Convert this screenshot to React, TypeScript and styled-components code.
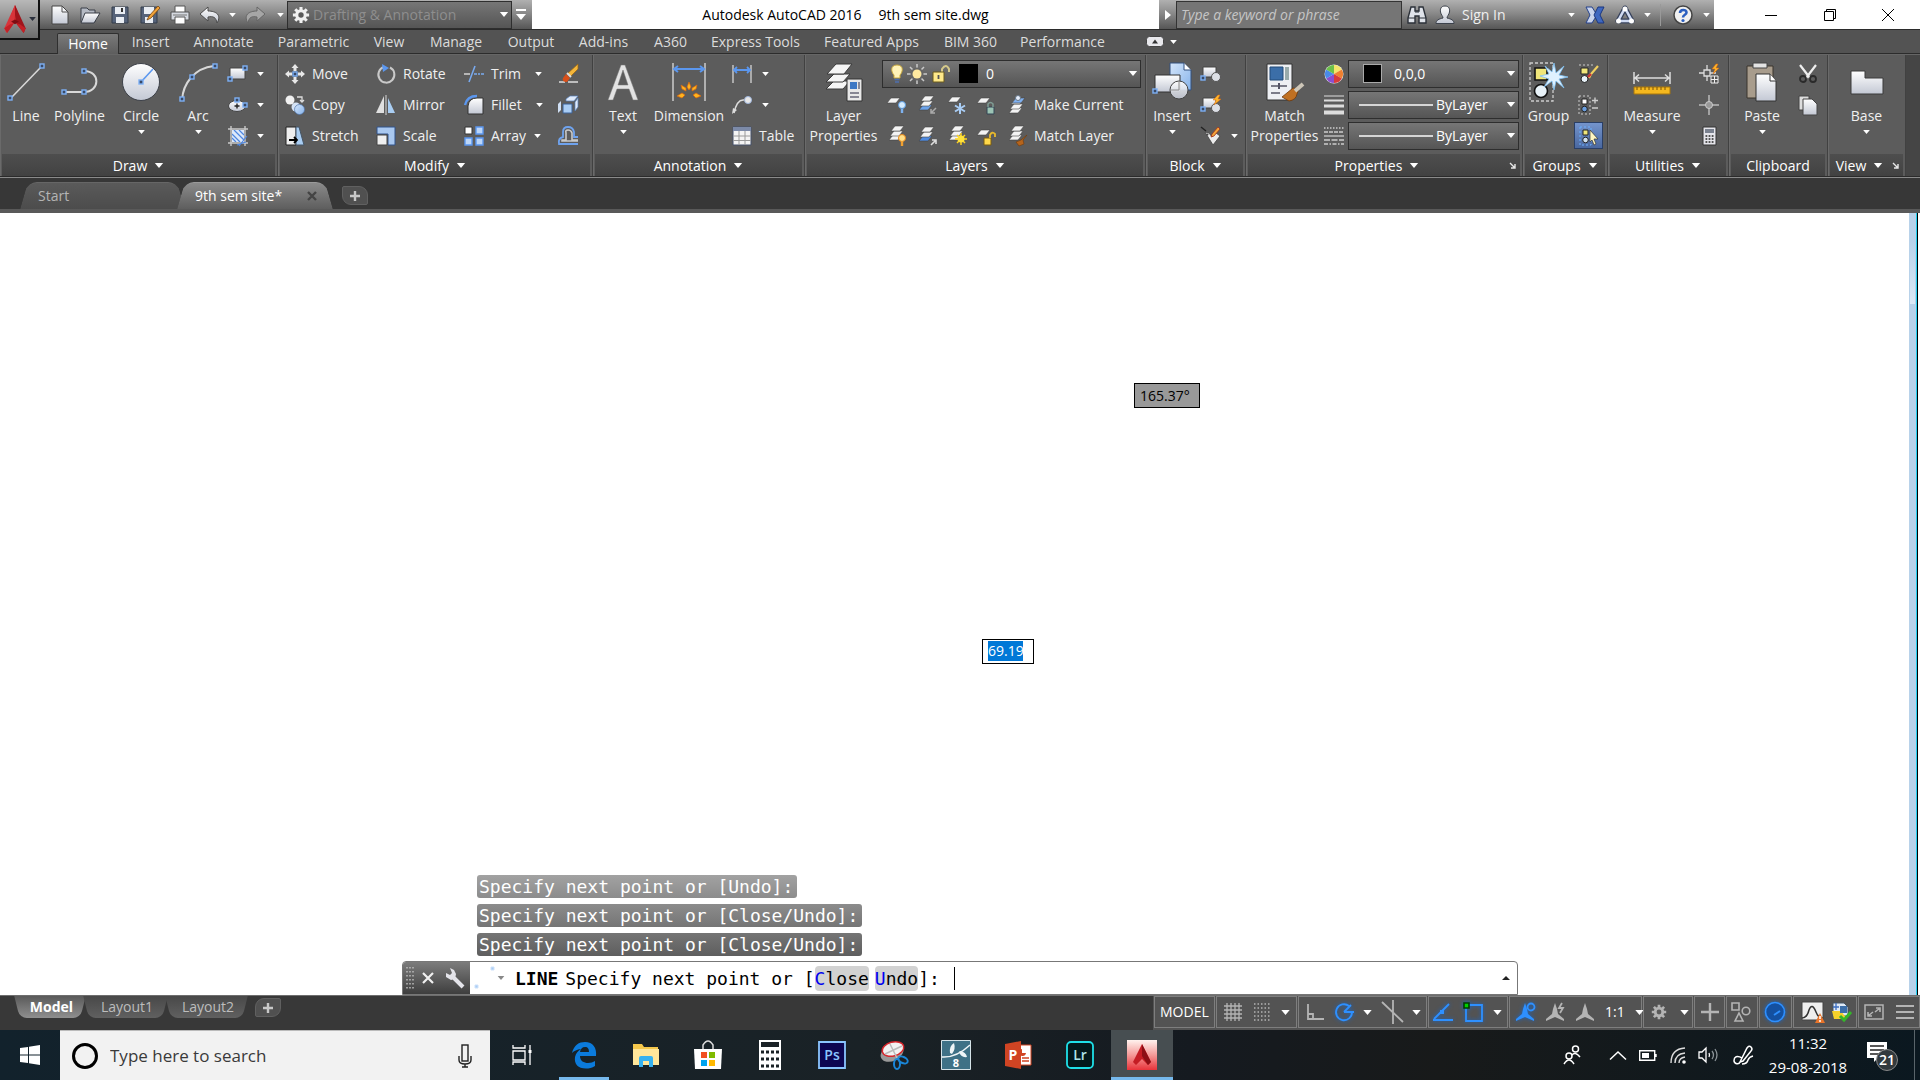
import React from "react";
import styled, { createGlobalStyle, css } from "styled-components";

const Global = createGlobalStyle`
  * { box-sizing: border-box; }
  body { margin: 0; background: #fff; }
  button, input, select { font: inherit; color: inherit; margin: 0; padding: 0; border: 0; background: none; }
  button { cursor: default; }
`;

const App_ = styled.div`
  display: flex;
  flex-direction: column;
  min-height: 100vh;
  font: 14px/20px "Open Sans", "Noto Sans", sans-serif;
  color: #f0f0f0;
  overflow: hidden;
`;

const row = css`
  display: flex;
  align-items: center;
`;

/* ---------- drawing helpers ---------- */

const Svg = styled.svg<{ $w?: number; $h?: number; $glow?: boolean }>`
  display: block;
  flex: none;
  width: ${(p) => p.$w ?? 20}px;
  height: ${(p) => p.$h ?? p.$w ?? 20}px;
  overflow: visible;
  ${(p) => p.$glow && "filter: drop-shadow(0 0 2px #1766c8);"}
`;

type DrawProps = { w?: number; h?: number; vb?: string; glow?: boolean; children: React.ReactNode };
const Draw = ({ w, h, vb, glow, children }: DrawProps) => (
  <Svg $w={w} $h={h} $glow={glow} viewBox={vb ?? `0 0 ${w ?? 20} ${h ?? w ?? 20}`} fill="none" aria-hidden="true">
    {children}
  </Svg>
);

const Tri = ({ w = 7, c = "#fff" }: { w?: number; c?: string }) => (
  <Draw w={w} h={w > 8 ? 5 : 4} vb="0 0 10 6">
    <path d="M0 0h10L5 6z" fill={c} />
  </Draw>
);

const grip = (x: number, y: number) => <rect x={x - 2} y={y - 2} width="4" height="4" fill="#3a4a66" stroke="#7db0f5" strokeWidth="1.4" />;
const sheet = (x: number, y: number, fill = "#f4f4f4") => <path d={`M${x + 4} ${y}h9l-4 5h-9z`} fill={fill} stroke="#444" strokeWidth=".6" />;

const Defs = () => (
  <Svg $w={0} $h={0} aria-hidden="true">
    <defs>
      <linearGradient id="silver" x1="0" y1="0" x2="0" y2="1">
        <stop offset="0" stopColor="#fff" />
        <stop offset="1" stopColor="#c3c8d4" />
      </linearGradient>
      <linearGradient id="sky" x1="0" y1="0" x2="1" y2="1">
        <stop offset="0" stopColor="#d5e6fb" />
        <stop offset="1" stopColor="#86b3ea" />
      </linearGradient>
      <linearGradient id="ruby" x1="0" y1="0" x2="0" y2="1">
        <stop offset="0" stopColor="#fff2ee" />
        <stop offset=".5" stopColor="#f59a98" />
        <stop offset="1" stopColor="#e8333a" />
      </linearGradient>
    </defs>
  </Svg>
);

const LogoA = ({ w, h }: { w: number; h: number }) => (
  <Draw w={w} h={h} vb="0 0 24 30">
    <path d="M12 0 7 13l-2 8 7-2 7 2-2-8z" fill="#c9242a" />
    <path d="M12 0 1 24l2 5 8-10 1-9z" fill="#d8343a" />
    <path d="M12 0l11 24-2 5-7-9-2-10z" fill="#a0141b" />
    <path d="M1 24l6-4 4-1-7 10zM23 24l-6-4-4-1 8 10z" fill="#c42026" />
    <path d="M8 17l4-2 4 2-4 3z" fill="#7d0d12" />
  </Draw>
);

/* ---------- title bar ---------- */

const TitleBar = styled.header`
  display: flex;
  position: relative;
  height: 30px;
  border-bottom: 1px solid #2b2b2b;
  background: #fff;
`;
const chrome = css`
  ${row}
  background: linear-gradient(#b0b0b0, #8a8a8a 45%, #565656);
`;
const QuickAccess = styled.nav`
  ${chrome}
  width: 532px;
  padding-left: 49px;
`;
const AppButton = styled.button`
  ${row}
  position: absolute;
  z-index: 2;
  left: 0;
  top: 0;
  width: 40px;
  height: 40px;
  padding-left: 3px;
  gap: 2px;
  background: linear-gradient(#b8b8b8, #6c6c6c);
  border-right: 2px solid #111;
  border-bottom: 2px solid #111;
`;
const ToolButton = styled.button<{ $w?: number; $end?: boolean }>`
  ${row}
  justify-content: ${(p) => (p.$end ? "flex-end" : "center")};
  flex: none;
  width: ${(p) => p.$w ?? 30}px;
  height: 28px;
`;
const Combo = styled.div<{ $h?: number; $w?: number; $gap?: number; $pad?: number }>`
  ${row}
  position: relative;
  flex: none;
  width: ${(p) => (p.$w ? `${p.$w}px` : "100%")};
  height: ${(p) => p.$h ?? 28}px;
  gap: ${(p) => p.$gap ?? 4}px;
  padding: 0 6px 0 ${(p) => p.$pad ?? 6}px;
  border: 1px solid #2e2e2e;
  background: linear-gradient(#767676, #555);
  > svg:last-child {
    position: absolute;
    right: 2px;
    pointer-events: none;
  }
`;
const Select = styled.select<{ $dim?: boolean }>`
  flex: 1;
  min-width: 0;
  height: 24px;
  appearance: none;
  outline: 0;
  color: ${(p) => (p.$dim ? "#8e8e8e" : "#fff")};
`;
const WindowTitle = styled.h1`
  ${row}
  justify-content: center;
  flex: 1;
  margin: 0;
  gap: 17px;
  font-size: 14px;
  font-weight: 400;
  color: #000;
`;
const InfoCenter = styled.div`
  ${chrome}
  width: 555px;
`;
const Keyword = styled.input`
  width: 226px;
  height: 28px;
  margin-left: -1px;
  padding-left: 4px;
  border: 1px solid #333;
  background: #757575;
  font-style: italic;
  &::placeholder { color: #c6c6c6; opacity: 1; }
`;
const SignIn = styled.button`
  ${row}
  flex: 1;
  gap: 7px;
  padding-left: 3px;
`;
const Rule = styled.i`
  width: 1px;
  height: 22px;
  background: #999;
  margin: 0 7px;
`;
const WindowButtons = styled.div`
  ${row}
  width: 206px;
  padding: 0 3px 0 27px;
`;

/* ---------- ribbon ---------- */

const TabRow = styled.nav`
  ${row}
  height: 24px;
  padding-left: 57px;
  background: #535353;
  border-bottom: 1px solid #2c2c2c;
`;
const RibbonTab = styled.button<{ $on?: boolean; $w: number }>`
  align-self: stretch;
  width: ${(p) => p.$w}px;
  padding-top: 1px;
  white-space: nowrap;
  color: ${(p) => (p.$on ? "#fff" : "#dcdcdc")};
  ${(p) =>
    p.$on &&
    css`
      border: 1px solid #2f2f2f;
      border-bottom: 0;
      margin: 3px 0 -1px;
      padding: 0;
      border-radius: 2px 2px 0 0;
      background: linear-gradient(#7a7a7a, #5d5d5d);
      line-height: 16px;
    `}
`;
const Ribbon = styled.div`
  display: flex;
  height: 124px;
  background: #454545;
  border-top: 1px solid #666;
  border-bottom: 1px solid #8a8a8a;
  box-shadow: inset 0 -1px #2b2b2b;
`;
const PanelBox = styled.section<{ $w: number }>`
  display: flex;
  flex-direction: column;
  flex: none;
  width: ${(p) => p.$w}px;
  margin-bottom: 1px;
  background: #5c5c5c;
  border-right: 1px solid #414141;
  box-shadow: inset 1px 0 #6a6a6a;
`;
const PanelBody = styled.div`
  display: flex;
  flex: 1;
  padding-top: 3px;
`;
const PanelTitle = styled.button<{ $launch?: boolean }>`
  ${row}
  justify-content: center;
  position: relative;
  gap: 7px;
  height: 22px;
  margin: 0 2px;
  padding: 1px ${(p) => (p.$launch ? 14 : 0)}px 0 0;
  color: #fff;
  background: linear-gradient(#4e4e4e, #424242);
`;
const Launcher = styled.span`
  position: absolute;
  right: 4px;
  top: 8px;
`;
const Panel = ({ w, title, menu = true, launch, children }: { w: number; title: string; menu?: boolean; launch?: boolean; children: React.ReactNode }) => (
  <PanelBox $w={w} aria-label={title}>
    <PanelBody>{children}</PanelBody>
    <PanelTitle $launch={launch}>
      {title}
      {menu && <Tri w={10} />}
      {launch && (
        <Launcher>
          <Draw w={7} h={7}><path d="M1 1l5 5M6 2v4H2" stroke="#e8e8e8" strokeWidth="1.4" /></Draw>
        </Launcher>
      )}
    </PanelTitle>
  </PanelBox>
);

const Big = styled.button<{ $w: number }>`
  display: flex;
  flex-direction: column;
  align-items: center;
  flex: none;
  width: ${(p) => p.$w}px;
  white-space: nowrap;
  > svg:last-child:not(:first-child) { margin-top: 4px; }
`;
const BigIcon = styled.span`
  ${row}
  justify-content: center;
  height: 48px;
`;
const BigButton = ({ w, icon, label, menu }: { w: number; icon: React.ReactNode; label: string[]; menu?: boolean }) => (
  <Big $w={w}>
    <BigIcon>{icon}</BigIcon>
    {label.map((l) => <span key={l}>{l}</span>)}
    {menu && <Tri />}
  </Big>
);
const Col = styled.div<{ $w: number; $pad?: number }>`
  display: flex;
  flex-direction: column;
  flex: none;
  width: ${(p) => p.$w}px;
  padding-left: ${(p) => p.$pad ?? 0}px;
`;
const SmallRow = styled.div`
  ${row}
  height: 31px;
`;
const Small = styled.button<{ $on?: boolean; $gap?: number }>`
  ${row}
  gap: ${(p) => p.$gap ?? 7}px;
  min-width: 20px;
  white-space: nowrap;
  ${(p) =>
    p.$on &&
    css`
      width: 29px;
      height: 27px;
      margin-left: -4px;
      padding-left: 4px;
      background: linear-gradient(#7494cc, #4a68a0);
      border: 1px solid #2a3f66;
    `}
`;
const DropButton = styled.button<{ $pad?: number }>`
  ${row}
  height: 20px;
  padding: 0 4px 0 ${(p) => p.$pad ?? 8}px;
`;
type Item = { icon: React.ReactNode; label?: string; menu?: number; name: string; on?: boolean };
const Tool = ({ icon, label, menu, name, on }: Item) => (
  <SmallRow>
    <Small aria-label={name} $on={on}>{icon}{label}</Small>
    {menu !== undefined && <DropButton $pad={menu} aria-label={`${name} options`}><Tri /></DropButton>}
  </SmallRow>
);

const LayerGrid = styled.div`
  display: flex;
  flex-direction: column;
  flex: 1;
  padding-right: 4px;
`;
const LayerTools = styled(SmallRow)`
  padding-left: 5px;
  gap: 10px;
`;
const PropRow = styled(SmallRow)`
  gap: 4px;
  padding-right: 4px;
`;
const Swatch = styled.i<{ $edge?: boolean }>`
  flex: none;
  width: 19px;
  height: 19px;
  margin: 0 4px;
  background: #000;
  border: 1px solid ${(p) => (p.$edge ? "#aaa" : "#000")};
`;
const Stroke = styled.i`
  width: 74px;
  height: 2px;
  background: #d5d5d5;
`;

/* ---------- document tabs ---------- */

const DocTabs = styled.nav`
  display: flex;
  align-items: flex-end;
  height: 35px;
  padding-left: 24px;
  background: #373737;
  border-bottom: 4px solid #595959;
`;
const DocTab = styled.button<{ $on?: boolean; $w: number }>`
  ${row}
  position: relative;
  isolation: isolate;
  justify-content: space-between;
  width: ${(p) => p.$w}px;
  height: 27px;
  padding: 1px 12px 0 14px;
  color: ${(p) => (p.$on ? "#fff" : "#b4b4b4")};
  &::before, &::after {
    content: "";
    position: absolute;
    z-index: -1;
    top: 0;
    bottom: 0;
    border-top: 1px solid ${(p) => (p.$on ? "#9a9a9a" : "#666")};
    background: ${(p) => (p.$on ? "linear-gradient(#8a8a8a, #5e5e5e)" : "linear-gradient(#5a5a5a, #4c4c4c)")};
  }
  &::before { left: 0; right: 50%; transform: skewX(-16deg); border-top-left-radius: 9px; }
  &::after { right: 0; left: 40%; transform: skewX(16deg); border-top-right-radius: 9px; }
`;
const NewTab = styled.button`
  ${row}
  justify-content: center;
  width: 26px;
  height: 19px;
  margin: 0 0 4px 13px;
  background: #505050;
  border: 1px solid #606060;
  border-radius: 2px 9px 2px 9px;
`;

/* ---------- drawing area ---------- */

const Canvas = styled.main`
  position: relative;
  flex: 1;
  min-height: 400px;
  background: #fff;
`;
const Edge = styled.div`
  position: absolute;
  top: 0;
  bottom: 0;
  right: 2px;
  width: 9px;
  background: #b8d2ea;
  border-right: 1px solid #000;
  box-shadow: inset -1px 0 #20d0f0;
`;
const Thumb = styled.div`
  height: 91px;
  margin: 0 2px 0 1px;
  background: linear-gradient(#b8d2ea 30%, #dce9f6);
`;
const Angle = styled.output`
  position: absolute;
  left: 1134px;
  top: 170px;
  width: 66px;
  height: 25px;
  padding-left: 5px;
  line-height: 23px;
  background: #999;
  border: 1px solid #000;
  color: #000;
`;
const LengthBox = styled.label`
  position: absolute;
  left: 982px;
  top: 426px;
  width: 52px;
  height: 25px;
  padding: 1px 5px;
  background: #fff;
  border: 1px solid #000;
`;
const LengthInput = styled.input`
  display: block;
  width: 35px;
  height: 20px;
  background: #0078d7;
  color: #fff;
`;
const Console = styled.div`
  position: absolute;
  left: 402px;
  right: 402px;
  bottom: 0;
  font: 18px/23px "DejaVu Sans Mono", "Liberation Mono", monospace;
`;
const History = styled.div`
  display: flex;
  flex-direction: column;
  align-items: flex-start;
  gap: 6px;
  margin: 0 0 5px 75px;
`;
const Past = styled.span<{ $tone: string }>`
  padding: 0 4px 0 2px;
  border-radius: 3px;
  background: ${(p) => p.$tone};
  color: #fff;
`;
const CommandLine = styled.form`
  ${row}
  height: 34px;
  border: 1px solid #777;
  border-radius: 4px 4px 0 0;
  background: #fff;
  color: #000;
  white-space: pre;
`;
const Handle = styled.div`
  ${row}
  align-self: stretch;
  width: 67px;
  gap: 8px;
  padding-left: 3px;
  background: linear-gradient(#7c7c7c, #3e3e3e);
  border-radius: 3px 0 0 0;
`;
const CommandIcon = styled.span`
  ${row}
  width: 45px;
  padding-left: 5px;
`;
const Keyname = styled.b`
  margin-right: 7px;
`;
const Option = styled.button`
  height: 25px;
  border-radius: 4px;
  background: #d2d2d2;
  color: #000;
  & + & { margin-left: 6px; }
  em { font-style: normal; color: #0000f0; }
`;
const Blink = styled.i`
  width: 1px;
  height: 23px;
  margin-left: 14px;
  background: #000;
`;
const CommandInput = styled.input`
  flex: 1;
  min-width: 0;
  outline: 0;
`;

/* ---------- layout tabs and status bar ---------- */

const StatusBar = styled.footer`
  display: flex;
  justify-content: space-between;
  height: 35px;
  background: #383838;
  border-top: 1px solid #6e6e6e;
`;
const Layouts = styled.nav`
  display: flex;
  padding-left: 17px;
`;
const LayoutTab = styled.button<{ $on?: boolean; $w: number }>`
  position: relative;
  isolation: isolate;
  width: ${(p) => p.$w}px;
  height: 22px;
  color: ${(p) => (p.$on ? "#fff" : "#bdbdbd")};
  font-weight: ${(p) => (p.$on ? 700 : 400)};
  &::before, &::after {
    content: "";
    position: absolute;
    z-index: -1;
    top: 0;
    bottom: 0;
    background: ${(p) => (p.$on ? "linear-gradient(#5a5a5a, #8f8f8f)" : "linear-gradient(#484848, #606060)")};
  }
  &::before { left: 0; right: 40%; transform: skewX(14deg); border-bottom-left-radius: 7px; }
  &::after { right: 3px; left: 40%; transform: skewX(-14deg); border-bottom-right-radius: 7px; }
`;
const AddLayout = styled(NewTab)`
  height: 19px;
  margin: 2px 0 0 7px;
  border-radius: 9px 2px 9px 2px;
`;
const Status = styled.div`
  display: flex;
  background: #535353;
  padding: 0 0 2px 1px;
  gap: 1px;
`;
const Cell = styled.div<{ $w: number; $pad?: number; $gap?: number }>`
  ${row}
  width: ${(p) => p.$w}px;
  padding-left: ${(p) => p.$pad ?? 6}px;
  gap: ${(p) => p.$gap ?? 9}px;
  border: 1px solid #7e7e7e;
  color: #fff;
`;
const Bare = styled.button`
  ${row}
  flex: none;
  height: 24px;
`;

/* ---------- taskbar ---------- */

const Taskbar = styled.footer`
  display: flex;
  height: 50px;
  background: linear-gradient(90deg, #12222c, #1a2226 45%, #151a20 62%, #181a1a 75%, #0b1820);
  color: #fff;
`;
const Slot = styled.button<{ $w?: number; $run?: boolean; $on?: boolean }>`
  ${row}
  justify-content: center;
  flex: none;
  width: ${(p) => p.$w ?? 62}px;
  background: ${(p) => (p.$on ? "#474e51" : "none")};
  border: solid transparent;
  border-width: 0 ${(p) => (p.$run && !p.$on ? 6 : 0)}px;
  background-clip: padding-box;
  ${(p) => p.$run && "background-image: linear-gradient(0deg, #76b9ed 3px, transparent 3px);"}
`;
const Search = styled.label`
  ${row}
  width: 430px;
  gap: 12px;
  padding: 0 18px 0 12px;
  border-top: 1px solid #bbb;
  background: #f2f2f2;
`;
const SearchInput = styled.input`
  flex: 1;
  min-width: 0;
  font-size: 17px;
  &::placeholder { color: #3a3a3a; opacity: 1; }
`;
const Tray = styled.div`
  display: flex;
  margin-left: auto;
  padding-right: 5px;
`;
const Clock = styled.button`
  width: 90px;
  padding-bottom: 1px;
  line-height: 24px;
  font-size: 15px;
`;
const Peek = styled.i`
  width: 1px;
  margin-left: 3px;
  background: #59646a;
`;

/* ---------- icons ---------- */

const stack = (y: number, fill?: string) => <>{sheet(2, y + 9, fill)}{sheet(3, y + 5)}{sheet(4, y)}</>;

const I = {
  newFile: <Draw><path d="M2 1h10l6 6v12H2z" fill="url(#silver)" stroke="#444" /><path d="M12 1v6h6" stroke="#555" /></Draw>,
  open: <Draw><path d="M1 3h6l2 2h6v12H1z" fill="#b5bac4" stroke="#3a3f48" /><path d="M5 8h15l-6 10H1z" fill="url(#silver)" stroke="#3a3f48" /></Draw>,
  save: <Draw><path d="M2 2h16v16H2z" fill="#56637a" stroke="#333c4b" /><path d="M5 2h10v7H5zM6 12h8v6H6z" fill="#e9edf3" /><path d="M12 3v4" stroke="#333" strokeWidth="2" /></Draw>,
  saveAs: <Draw><path d="M1 2h16v16H1z" fill="#56637a" stroke="#333c4b" /><path d="M4 2h10v7H4zM5 12h8v6H5z" fill="#e9edf3" /><path d="M18 1 9 11l-2 4 4-2 9-10z" fill="#f2a33a" stroke="#74420c" strokeWidth=".8" /></Draw>,
  print: <Draw><path d="M5 1h10v7H5z" fill="#fff" stroke="#555" /><path d="M1 7h18v8H1z" fill="#d5d9e0" stroke="#555" /><path d="M5 12h10v7H5z" fill="#fff" stroke="#555" /><path d="M3 10h14" stroke="#777" /></Draw>,
  undo: <Draw><path d="M8 2 0 9l8 7v-4c5-1 8 0 9 6 5-8-1-12-9-12z" fill="url(#silver)" stroke="#4b4b4b" /></Draw>,
  redo: <Draw><path d="M12 2l8 7-8 7v-4c-5-1-8 0-9 6-5-8 1-12 9-12z" fill="#a6a6a6" stroke="#666" /></Draw>,
  gear: (c: string, w = 20) => <Draw w={w} vb="0 0 20 20"><g stroke={c} strokeWidth="3.4"><path d="M10 1v18M1 10h18M3.6 3.6l12.8 12.8M16.4 3.6 3.6 16.4" /></g><circle cx="10" cy="10" r="6.5" fill={c} /><circle cx="10" cy="10" r="3" fill="#5a5a5a" /></Draw>,
  binoc: <Draw><path d="M4 2h4v4h4V2h4l3 11v5h-7v-7H8v7H1v-5z" fill="#dfe3ea" stroke="#2b3038" strokeWidth="1.4" /><path d="M1 13h7M12 13h7M8 7h4" stroke="#2b3038" /></Draw>,
  user: <Draw><path d="M10 1c4 0 5 3 4.500 6S12 11 12 13c4 1 7 2 7 5.500H1C1 15 4 14 8 13c0-2-2-3-2.500-6S6 1 10 1z" fill="url(#silver)" stroke="#3c424c" /></Draw>,
  xchg: <Draw><path d="M1 2h6l5 8-5 8H1l4-8z" fill="#c9d4ec" stroke="#24418c" /><path d="M19 2h-6l-4 8 4 8h6l-4-8z" fill="#3f68c0" stroke="#1b377f" /></Draw>,
  a360: <Draw><path d="M10 3 3 16h14z" stroke="#37425c" strokeWidth="5" strokeLinejoin="round" /><path d="M10 3 3 16h14z" stroke="#cfdaf2" strokeWidth="2.6" strokeLinejoin="round" /><circle cx="10" cy="4" r="2.500" fill="#fff" /><circle cx="3.500" cy="16" r="2.500" fill="#fff" /><circle cx="16.500" cy="16" r="2.500" fill="#fff" /></Draw>,
  line: <Draw w={40} h={40}><path d="M5 36 36 4" stroke="#d8d8d8" strokeWidth="1.6" />{grip(4, 36)}{grip(36, 4)}</Draw>,
  poly: <Draw w={40} h={40}><path d="M4 30h20c16 0 17-21 0-21" stroke="#d8d8d8" strokeWidth="2" />{grip(4, 30)}{grip(24, 30)}{grip(24, 9)}</Draw>,
  circle: <Draw w={40} h={40}><circle cx="20" cy="20" r="18.500" fill="url(#silver)" stroke="#3d4149" /><path d="M20 20 32 7" stroke="#5b97ef" strokeWidth="1.6" />{grip(20, 20)}</Draw>,
  arc: <Draw w={40} h={40}><path d="M4 38C5 22 16 6 36 4" stroke="#d8d8d8" strokeWidth="2" />{grip(4, 37)}{grip(14, 15)}{grip(37, 4)}</Draw>,
  rect: <Draw><path d="M2 4h15v11H2z" fill="url(#silver)" stroke="#444" />{grip(17, 4)}{grip(2, 15)}</Draw>,
  ellipse: <Draw><ellipse cx="9" cy="11" rx="8.500" ry="5.500" fill="url(#silver)" stroke="#444" /><path d="M9 8.500v5M6.500 11h5" stroke="#222" strokeWidth="1.4" />{grip(9, 5)}{grip(17, 10)}</Draw>,
  hatch: <Draw><path d="M4 4h12v12H4z" fill="#dce8fa" /><path d="M4 8l8 8M4 12l4 4M6 4l10 10M11 4l5 5" stroke="#4d86e0" strokeWidth="1.2" /><path d="M0 3h20M0 17h20M3 0v20M17 0v20" stroke="#c9c9c9" strokeWidth="1.4" /><path d="M11 20l8-10M9 19l9-3" stroke="#4d86e0" strokeWidth="1.2" /></Draw>,
  move: <Draw><path d="M10 0l3.500 4h-2v3h-3V4h-2zM10 20l3.500-4h-2v-3h-3v3h-2zM0 10l4-3.500v2h3v3H4v2zM20 10l-4-3.500v2h-3v3h3v2z" fill="#e8e8e8" />{grip(10, 10)}</Draw>,
  copy: <Draw><circle cx="5" cy="5" r="4.500" fill="#f1f1f1" /><circle cx="11" cy="12" r="4.500" fill="#d5e3f5" /><circle cx="14.500" cy="14.500" r="5" fill="url(#sky)" stroke="#4f74ab" strokeWidth=".7" /><path d="M12 2h5v4m-2-1 2 2 2-2" stroke="#ddd" strokeWidth="1.3" /></Draw>,
  stretch: <Draw><path d="M1 1h10v18H1z" fill="#eee" stroke="#222" /><path d="M11 1h3l5 18h-8z" fill="#a9cdf2" stroke="#456" /><path d="M4 14h8m-3-3 3 3-3 3" stroke="#000" strokeWidth="1.8" /></Draw>,
  rotate: <Draw><path d="M8 3a8 8 0 1 0 6 0.500" stroke="#c9c9c9" strokeWidth="2" /><path d="M6 0l7 4-6 4z" fill="#5b97ef" /></Draw>,
  mirror: <Draw><path d="M8 1v17H0z" fill="#e0e0e0" /><path d="M12 3v15h7z" fill="#a9cdf2" /><path d="M10 0v20" stroke="#d8d8d8" /></Draw>,
  scale: <Draw><path d="M1 1h18v18h-7V8H1z" fill="#a9c8f0" stroke="#31528a" /><path d="M1 9h10v10H1z" fill="#f0f0f0" stroke="#444" /></Draw>,
  trim: <Draw><path d="M10 10h3m1 0h2m1 0h3" stroke="#79aaf0" strokeWidth="1.4" /><path d="M5 18 11 2" stroke="#79aaf0" strokeWidth="1.6" /><path d="M0 10h6" stroke="#ddd" strokeWidth="1.4" /></Draw>,
  fillet: <Draw><path d="M4 19V11q1-8 9-8h6v16z" fill="url(#silver)" stroke="#333" /><path d="M1 10Q3 1 13 1" stroke="#5b97ef" strokeWidth="2.400" /></Draw>,
  array: <Draw><path d="M1 1h7v7H1z" fill="#fff" stroke="#333" /><path d="M12 1h7v7h-7zM1 12h7v7H1zM12 12h7v7h-7z" fill="#bcd6f8" stroke="#5b97ef" strokeWidth="1.4" /></Draw>,
  erase: <Draw><path d="M1 18h6M10 18h10" stroke="#ddd" strokeWidth="1.3" /><path d="M20 0v5l-8 8-3-3z" fill="#f4b63a" stroke="#9a6410" strokeWidth=".7" /><path d="M8 10l4 4-3 4c-3 0-5-1-4-4z" fill="#d94f18" /><path d="M9 9l4 4" stroke="#ddd" strokeWidth="2" /></Draw>,
  explode: <Draw><path d="M8 4l4-3h8l-4 5H8zM17 7l3-4v9l-3 4z" fill="#dfeafa" stroke="#5580bb" strokeWidth=".7" /><path d="M5 9h9v9H5z" fill="#a9cdf5" stroke="#3c6399" /><path d="M0 9l3-3v9l-3 3z" fill="#cfdff4" /></Draw>,
  offset: <Draw><path d="M20 11h-4V6q-1-5-6-5T5 6v5Q0 12 1 18h19" stroke="#6fa3ee" strokeWidth="1.800" /><path d="M20 14h-6V7q-1-3-4-3T8 7v7H4v1h16" stroke="#c9c9c9" strokeWidth="1.600" /></Draw>,
  text: <Draw w={34} h={38}><path d="M2 37 15 2h4l13 35h-5l-4-11H11L7 37zM12 22h10L17 7z" fill="#e3e3e3" fillRule="evenodd" stroke="#777" strokeWidth=".5" /></Draw>,
  dim: <Draw w={34} h={40}><path d="M1 1v38M33 1v38" stroke="#ccc" strokeWidth="1.500" /><path d="M2 7h30M6 4 2 7l4 3M28 4l4 3-4 3" stroke="#5b97ef" strokeWidth="2" /><path d="M17 20l2 5-2 3-2-3zM9 23l5 3v3l-4-2zM25 23l-5 3v3l4-2zM5 34l5-3 3 2-3 3zM29 34l-5-3-3 2 3 3z" fill="#ffb41f" stroke="#d9660e" strokeWidth=".7" /></Draw>,
  linear: <Draw><path d="M1 1v18M19 1v18" stroke="#ccc" strokeWidth="1.400" /><path d="M2 6h16M5 3 2 6l3 3M15 3l3 3-3 3" stroke="#5b97ef" strokeWidth="1.800" /></Draw>,
  leader: <Draw><path d="M2 18Q5 4 12 5" stroke="#ddd" strokeWidth="1.500" /><path d="M0 19l1-6 4 2z" fill="#ddd" /><circle cx="16" cy="5" r="3.500" fill="#e8e8e8" stroke="#9fb6dd" /></Draw>,
  table: <Draw><path d="M1 1h18v18H1z" fill="#f4f4f4" stroke="#44506a" /><path d="M1 1h18v4H1z" fill="#7c8aa8" /><path d="M1 10h18M1 14.500h18M7 5v14M13 5v14" stroke="#9a9a9a" /></Draw>,
  layerProps: <Draw w={38} h={40}><g fill="#f5f5f5" stroke="#3b3b3b"><path d="M9 19h16l-7 8H1z" /><path d="M9 12h16l-7 8H1z" /><path d="M11 2h16l-8 10H2z" /></g><path d="M22 17h15v22H22z" fill="#e8e8e8" stroke="#333" /><path d="M25 20h7v7h-7z" fill="#3e78c4" /><path d="M34 20v7M25 31h9M25 35h9" stroke="#667" strokeWidth="1.400" /></Draw>,
  bulb: <Draw w={12} h={20}><path d="M6 1c7 0 6 7 3 10v3H3v-3C0 8-1 1 6 1z" fill="#fff3b8" stroke="#c9a83c" /><path d="M3.500 15.500h5M4 18h4" stroke="#4d6fb0" strokeWidth="1.500" /></Draw>,
  sun: <Draw><g stroke="#c9c9c9" strokeWidth="1.500"><path d="M10 0v20M0 10h20M3 3l14 14M17 3 3 17" /></g><circle cx="10" cy="10" r="6.500" fill="#666" /><circle cx="10" cy="10" r="4.500" fill="#ffe9a0" /></Draw>,
  unlock: <Draw><path d="M11 9V5q4-6 7 0v3" stroke="#d5c98a" strokeWidth="2" /><path d="M2 8h11v10H2z" fill="#ffe98a" stroke="#6b5b1c" /><path d="M7.500 11v4" stroke="#555" strokeWidth="1.800" /></Draw>,
  lOff: <Draw>{sheet(0, 3)}<circle cx="15" cy="10" r="3.500" fill="#d5ecff" stroke="#5a9be0" /><path d="M15 14v4" stroke="#7eb2f0" strokeWidth="2.400" /></Draw>,
  lIso: <Draw>{stack(1, "#6ba3ea")}<path d="M19 13l-5 5m0-4v4h4" stroke="#aaa" strokeWidth="1.500" /></Draw>,
  lFrz: <Draw>{sheet(1, 2)}<path d="M13 8v11M8 10.500l10 6M18 10.500l-10 6" stroke="#a9cdf5" strokeWidth="2" /></Draw>,
  lLock: <Draw>{sheet(0, 3)}<path d="M10 12h7v7h-7z" fill="#9cc4b4" stroke="#345" /><path d="M11 12V9q2.500-3 5 0v3" stroke="#7f9c94" strokeWidth="1.500" /></Draw>,
  lCur: <Draw>{stack(4)}{sheet(5, 3, "#7fb0f0")}<circle cx="11" cy="3" r="2.500" fill="#e6eefc" stroke="#678" /></Draw>,
  lOn: <Draw>{stack(0)}<circle cx="15" cy="12" r="3.500" fill="#ffe08a" stroke="#e8871a" /><path d="M15 15v5" stroke="#f0a030" strokeWidth="2.400" /></Draw>,
  lUniso: <Draw>{stack(1, "#4f8ae0")}<path d="M14 19l5-5m-4 0h4v4" stroke="#ddd" strokeWidth="1.600" /></Draw>,
  lThaw: <Draw>{stack(0)}<path d="M14 7v12M8 13h12M10 9l8 8M18 9l-8 8" stroke="#ffd21e" strokeWidth="1.500" /><circle cx="14" cy="13" r="3.500" fill="#ffe23a" /></Draw>,
  lUnlock: <Draw>{sheet(0, 4)}<path d="M7 12h7v7H7z" fill="#ffd84a" stroke="#7a5c10" /><path d="M13 12V9q2-4 5-1v3" stroke="#e8b92c" strokeWidth="1.800" /></Draw>,
  lMatch: <Draw>{stack(0)}<path d="M20 9l-4 5 1 4-5 2-3-4 5-2z" fill="#b5641c" stroke="#6e3a0c" strokeWidth=".6" /></Draw>,
  insert: <Draw w={40} h={40}><path d="M18 1h14l7 7v20H18z" fill="url(#sky)" stroke="#33507e" /><path d="M32 1v7h7" fill="#fff" stroke="#33507e" /><path d="M3 13h25v17H3z" fill="url(#silver)" stroke="#333" /><circle cx="27" cy="28" r="9" fill="url(#silver)" fillOpacity=".9" stroke="#444" /><path d="M27 20v8h-8" stroke="#888" />{grip(3, 29)}</Draw>,
  block: (extra: React.ReactNode) => <Draw><path d="M2 3h13v10H2z" fill="url(#silver)" stroke="#444" /><circle cx="15" cy="13" r="4.500" fill="#dcdfe6" stroke="#555" />{grip(2, 14)}{extra}</Draw>,
  attrib: <Draw><path d="M0 1l5 4" stroke="#222" strokeWidth="1.500" /><path d="M4 6l4 1 3 4 4-4 4 3-7 9z" fill="#ececec" stroke="#444" strokeWidth=".8" /><circle cx="6.500" cy="8.500" r="1" fill="#444" /><path d="M17 1l-6 7-1 3 3-1 6-7z" fill="#f2a33a" stroke="#a3341a" strokeWidth=".8" /></Draw>,
  matchProps: <Draw w={40} h={40}><path d="M2 2h25v36H2z" fill="#eef0f4" stroke="#333" /><path d="M5 5h13v13H5z" fill="#3b6ea8" stroke="#234a78" /><path d="M22 5v13" stroke="#9aa" strokeWidth="4" /><path d="M6 24h16M6 31h9" stroke="#556" strokeWidth="1.500" /><path d="M14 21v6" stroke="#556" strokeWidth="2" /><path d="M33 27l-5-1-11 9 7 4q7-1 8-7l1-3z" fill="#c07022" stroke="#6e3a0c" strokeWidth=".8" /><path d="M38 22l-8 7" stroke="#cdc6b8" strokeWidth="4" /></Draw>,
  wheel: <Draw><circle cx="10" cy="10" r="9.500" fill="#eee" /><path d="M10 10V1a9 9 0 0 1 7.800 4.500z" fill="#f5e56a" /><path d="M10 10l7.800-4.500a9 9 0 0 1 0 9z" fill="#f08030" /><path d="M10 10l7.800 4.500A9 9 0 0 1 10 19z" fill="#d83a3a" /><path d="M10 10v9a9 9 0 0 1-7.800-4.500z" fill="#8a4fd0" /><path d="M10 10l-7.800 4.500a9 9 0 0 1 0-9z" fill="#4a8ae8" /><path d="M10 10 2.200 5.500A9 9 0 0 1 10 1z" fill="#6cc04a" /></Draw>,
  weight: <Draw><path d="M0 1h20" stroke="#ddd" /><path d="M0 5.500h20" stroke="#ddd" strokeWidth="2" /><path d="M0 11h20" stroke="#ddd" strokeWidth="3" /><path d="M0 17.500h20" stroke="#ddd" strokeWidth="4" /></Draw>,
  ltype: <Draw><path d="M0 2h20" stroke="#ccc" strokeWidth="1.300" strokeDasharray="1.500 1.500" /><path d="M0 6h20" stroke="#ccc" strokeWidth="1.300" strokeDasharray="4 1" /><path d="M0 10h20" stroke="#ccc" strokeWidth="1.300" /><path d="M0 14h20" stroke="#ccc" strokeWidth="1.300" strokeDasharray="6 1.500" /><path d="M0 18h20" stroke="#ccc" strokeWidth="1.300" strokeDasharray="4 1.500 1.500 1.500" /></Draw>,
  group: <Draw w={40} h={40}><path d="M1 1h23v38H1z" stroke="#ccc" strokeWidth="1.300" strokeDasharray="3 2" /><path d="M6 6h12v12H6z" fill="#f0e67a" stroke="#111" strokeWidth="1.600" /><circle cx="12" cy="29" r="6.500" fill="#e8f2f8" stroke="#111" strokeWidth="1.600" /><path d="M25 1l2 10 8-7-5 9 9 2-9 2 5 9-8-7-2 9-2-9-8 6 5-8-9-3 9-2-4-8 7 6z" fill="#dff1ff" stroke="#7fc0f2" strokeWidth=".8" /></Draw>,
  ungroup: <Draw><path d="M1 1h14" stroke="#ccc" strokeDasharray="2 2" /><path d="M3 4h7v6H3z" fill="#f0e67a" stroke="#222" /><circle cx="6.500" cy="15" r="3.500" fill="#e8f2f8" stroke="#222" /><path d="M20 2l-7 8-2 4" stroke="#f0d060" strokeWidth="2.200" /><path d="M13 10l-3 3" stroke="#c33" strokeWidth="2.400" /></Draw>,
  gEdit: <Draw><path d="M1 1h11v18H1z" stroke="#ccc" strokeDasharray="2 2" /><path d="M4 4h5v5H4z" fill="#fff" stroke="#222" /><circle cx="6.500" cy="14" r="2.800" fill="#6b9fe0" stroke="#222" /><path d="M14 5.500h6M17 2.500v6M14 13h6" stroke="#ccc" strokeWidth="1.400" /></Draw>,
  gSel: <Draw><path d="M1 1h11v18H1z" stroke="#6ab0ff" strokeDasharray="2 2" /><path d="M4 4h5v5H4z" fill="#f0e67a" stroke="#222" /><circle cx="6.500" cy="14" r="2.800" fill="#cfe0f0" stroke="#222" /><path d="M11 4l8 9h-4l2 5-2 1-2-5-2 2z" fill="#fff6c0" stroke="#333" strokeWidth=".7" /></Draw>,
  measure: <Draw w={40} h={40}><path d="M2 10v12M38 10v12M2 16h36M7 12.500 3 16l4 3.500M33 12.500l4 3.500-4 3.500" stroke="#ddd" strokeWidth="1.500" /><path d="M2 25h36v7H2z" fill="#f5b81e" stroke="#a8760c" /><path d="M5 25v3m4-3v3m4-3v3m4-3v3m4-3v3m4-3v3m4-3v3m4-3v3" stroke="#7a5208" /></Draw>,
  idPoint: <Draw><path d="M8 1v16M0 9h17" stroke="#ddd" strokeWidth="1.300" /><path d="M5 6h6v6H5z" fill="#5c5c5c" stroke="#ddd" strokeWidth="1.300" /><path d="M17 0l-4 5h3l-2 5 6-6h-3l2-4z" fill="#ffb52a" stroke="#d9660e" strokeWidth=".5" /><path d="M12 12h7v7h-7zM12 15.500h7M15.500 12v7" stroke="#eee" fill="#555" /></Draw>,
  point: <Draw><path d="M10 0v20M0 10h20" stroke="#bbb" strokeWidth="1.500" /><circle cx="10" cy="10" r="3.500" fill="#999" stroke="#ccc" /></Draw>,
  calc: <Draw><path d="M4 1h13v18H4z" fill="#e6e6ec" stroke="#333" /><path d="M6 3h9v4H6z" fill="#7b8290" /><path d="M6.500 10h8M6.500 13h8M6.500 16h8" stroke="#555" strokeWidth="1.800" strokeDasharray="1.800 1.300" /></Draw>,
  paste: <Draw w={34} h={40}><path d="M2 4h26v32H2z" fill="#a89c8c" stroke="#3a342c" /><path d="M8 1h14v5H8z" fill="#e4e4e4" stroke="#444" /><path d="M11 12h14l6 7v20H11z" fill="url(#silver)" stroke="#333" /><path d="M25 12v7h6" fill="#fff" stroke="#333" /></Draw>,
  cut: <Draw><path d="M2 1l10 13M18 1 8 14" stroke="#eee" strokeWidth="2.200" /><circle cx="5" cy="15" r="3" stroke="#2a2a2a" strokeWidth="1.800" /><circle cx="15" cy="15" r="3" stroke="#2a2a2a" strokeWidth="1.800" /></Draw>,
  copyClip: <Draw><path d="M1 1h10v14H1z" fill="#ddd" stroke="#444" /><path d="M5 4h9l5 5v11H5z" fill="url(#silver)" stroke="#444" /></Draw>,
  base: <Draw w={34} h={40}><path d="M1 9h14v7h18v16H1z" fill="url(#silver)" stroke="#3a3a3a" /></Draw>,
};

const tabs: [string, number][] = [
  ["Home", 62], ["Insert", 63], ["Annotate", 83], ["Parametric", 97], ["View", 54], ["Manage", 80], ["Output", 70],
  ["Add-ins", 75], ["A360", 59], ["Express Tools", 111], ["Featured Apps", 121], ["BIM 360", 77], ["Performance", 107],
];

const G = "#b4b4b4";
const B = "#2e90ff";
const person = (c: string) => <path d="M10 1l2 6 1 5 6 5v2l-9-4-9 4v-2l6-5 1-5z" fill={c} />;

export default function App() {
  return (
    <App_>
      <Global />
      <Defs />
      <TitleBar>
        <AppButton aria-label="Application menu"><LogoA w={24} h={29} /><Tri w={7} c="#2a2f3c" /></AppButton>
        <QuickAccess aria-label="Quick access">
          <ToolButton $w={21} aria-label="New">{I.newFile}</ToolButton>
          <ToolButton $w={39} aria-label="Open">{I.open}</ToolButton>
          <ToolButton $w={22} aria-label="Save">{I.save}</ToolButton>
          <ToolButton $w={37} aria-label="Save as">{I.saveAs}</ToolButton>
          <ToolButton $w={23} aria-label="Plot">{I.print}</ToolButton>
          <ToolButton $w={37} aria-label="Undo">{I.undo}</ToolButton>
          <ToolButton $w={8} aria-label="Undo list"><Tri /></ToolButton>
          <ToolButton $w={38} aria-label="Redo">{I.redo}</ToolButton>
          <ToolButton $w={13} aria-label="Redo list"><Tri /></ToolButton>
          <Combo $w={225} $pad={4} $gap={3}>
            {I.gear("#f0f0f0", 18)}
            <Select $dim aria-label="Workspace"><option>Drafting &amp; Annotation</option></Select>
            <Tri w={10} />
          </Combo>
          <ToolButton $w={18} aria-label="Customize"><Draw w={10} h={12}><path d="M0 1h10" stroke="#fff" strokeWidth="2" /><path d="M0 5h10l-5 6z" fill="#fff" /></Draw></ToolButton>
        </QuickAccess>
        <WindowTitle><span>Autodesk AutoCAD 2016</span><span>9th sem site.dwg</span></WindowTitle>
        <InfoCenter>
          <ToolButton $w={18} aria-label="Collapse search"><Draw w={6} h={10}><path d="M0 0l6 5-6 5z" fill="#fff" /></Draw></ToolButton>
          <Keyword aria-label="Search help" placeholder="Type a keyword or phrase" />
          <ToolButton aria-label="Search">{I.binoc}</ToolButton>
          <SignIn>{I.user}Sign In</SignIn>
          <ToolButton $w={20} aria-label="Sign in options"><Tri /></ToolButton>
          <ToolButton $w={28} aria-label="Exchange apps">{I.xchg}</ToolButton>
          <ToolButton $w={32} aria-label="Autodesk 360">{I.a360}</ToolButton>
          <ToolButton $w={12} aria-label="Autodesk 360 options"><Tri /></ToolButton>
          <Rule />
          <ToolButton $w={30} aria-label="Help">
            <Draw><circle cx="10" cy="10" r="9" fill="#f0f0f0" stroke="#444" strokeWidth="1.500" /><path d="M7 8c0-4 6.500-4 6.500-.5C13.500 10 10 9.500 10 12.500" stroke="#2b5fc0" strokeWidth="2.600" /><circle cx="10" cy="15.500" r="1.600" fill="#2b5fc0" /></Draw>
          </ToolButton>
          <ToolButton $w={16} aria-label="Help options"><Tri /></ToolButton>
        </InfoCenter>
        <WindowButtons>
          <ToolButton $w={59} aria-label="Minimize"><Draw w={12}><path d="M0 6.500h12" stroke="#000" /></Draw></ToolButton>
          <ToolButton $w={59} aria-label="Restore"><Draw w={12}><path d="M.5 2.500h9v9h-9zM2.500 2V.5h9v9H10" stroke="#000" /></Draw></ToolButton>
          <ToolButton $w={58} aria-label="Close"><Draw w={12}><path d="M0 0l12 12M12 0 0 12" stroke="#000" /></Draw></ToolButton>
        </WindowButtons>
      </TitleBar>

      <TabRow aria-label="Ribbon tabs">
        {tabs.map(([t, w], i) => <RibbonTab key={t} $w={w} $on={i === 0}>{t}</RibbonTab>)}
        <ToolButton $w={48} $end aria-label="Minimize ribbon"><Draw w={18} h={11}><rect x=".5" y=".5" width="17" height="10" rx="3" fill="#e8e8ec" stroke="#444" /><path d="M6 7.500h6L9 3.500z" fill="#333" /></Draw></ToolButton>
        <ToolButton $w={18} aria-label="Ribbon options"><Tri /></ToolButton>
      </TabRow>

      <Ribbon>
        <Panel w={278} title="Draw">
          <BigButton w={52} icon={I.line} label={["Line"]} />
          <BigButton w={55} icon={I.poly} label={["Polyline"]} />
          <BigButton w={68} icon={I.circle} label={["Circle"]} menu />
          <BigButton w={46} icon={I.arc} label={["Arc"]} menu />
          <Col $w={50} $pad={7}>
            <Tool icon={I.rect} name="Rectangle" menu={9} />
            <Tool icon={I.ellipse} name="Ellipse" menu={9} />
            <Tool icon={I.hatch} name="Hatch" menu={9} />
          </Col>
        </Panel>
        <Panel w={315} title="Modify">
          <Col $w={98} $pad={7}>
            <Tool icon={I.move} name="Move" label="Move" />
            <Tool icon={I.copy} name="Copy" label="Copy" />
            <Tool icon={I.stretch} name="Stretch" label="Stretch" />
          </Col>
          <Col $w={88}>
            <Tool icon={I.rotate} name="Rotate" label="Rotate" />
            <Tool icon={I.mirror} name="Mirror" label="Mirror" />
            <Tool icon={I.scale} name="Scale" label="Scale" />
          </Col>
          <Col $w={94}>
            <Tool icon={I.trim} name="Trim" label="Trim" menu={14} />
            <Tool icon={I.fillet} name="Fillet" label="Fillet" menu={14} />
            <Tool icon={I.array} name="Array" label="Array" menu={8} />
          </Col>
          <Col $w={30}>
            <Tool icon={I.erase} name="Erase" />
            <Tool icon={I.explode} name="Explode" />
            <Tool icon={I.offset} name="Offset" />
          </Col>
        </Panel>
        <Panel w={212} title="Annotation">
          <BigButton w={60} icon={I.text} label={["Text"]} menu />
          <BigButton w={72} icon={I.dim} label={["Dimension"]} />
          <Col $w={70} $pad={7}>
            <Tool icon={I.linear} name="Linear" menu={10} />
            <Tool icon={I.leader} name="Leader" menu={10} />
            <Tool icon={I.table} name="Table" label="Table" />
          </Col>
        </Panel>
        <Panel w={341} title="Layers">
          <BigButton w={77} icon={I.layerProps} label={["Layer", "Properties"]} />
          <LayerGrid>
            <SmallRow>
              <Combo $gap={4} $pad={8}>
                {I.bulb}{I.sun}{I.unlock}<Swatch />
                <Select aria-label="Layer"><option>0</option></Select>
                <Tri w={10} />
              </Combo>
            </SmallRow>
            <LayerTools>
              <Small aria-label="Off">{I.lOff}</Small><Small aria-label="Isolate">{I.lIso}</Small>
              <Small aria-label="Freeze">{I.lFrz}</Small><Small aria-label="Lock">{I.lLock}</Small>
              <Small>{I.lCur}Make Current</Small>
            </LayerTools>
            <LayerTools>
              <Small aria-label="Turn all on">{I.lOn}</Small><Small aria-label="Unisolate">{I.lUniso}</Small>
              <Small aria-label="Thaw all">{I.lThaw}</Small><Small aria-label="Unlock">{I.lUnlock}</Small>
              <Small>{I.lMatch}Match Layer</Small>
            </LayerTools>
          </LayerGrid>
        </Panel>
        <Panel w={100} title="Block">
          <BigButton w={52} icon={I.insert} label={["Insert"]} menu />
          <Col $w={47} $pad={3}>
            <Tool icon={I.block(null)} name="Create block" />
            <Tool icon={I.block(<path d="M17 0l-5 5h3l-2 5 7-6h-3l2-4z" fill="#ffb52a" stroke="#d9660e" strokeWidth=".5" />)} name="Edit block" />
            <Tool icon={I.attrib} name="Edit attributes" menu={10} />
          </Col>
        </Panel>
        <Panel w={277} title="Properties" launch>
          <BigButton w={77} icon={I.matchProps} label={["Match", "Properties"]} />
          <Col $w={199} $pad={1}>
            <PropRow>{I.wheel}<Combo $w={171} $pad={10} $gap={8}><Swatch $edge /><Select aria-label="Object color"><option>0,0,0</option></Select><Tri w={10} /></Combo></PropRow>
            <PropRow>{I.weight}<Combo $w={171} $pad={10} $gap={3}><Stroke /><Select aria-label="Lineweight"><option>ByLayer</option></Select><Tri w={10} /></Combo></PropRow>
            <PropRow>{I.ltype}<Combo $w={171} $pad={10} $gap={3}><Stroke /><Select aria-label="Linetype"><option>ByLayer</option></Select><Tri w={10} /></Combo></PropRow>
          </Col>
        </Panel>
        <Panel w={85} title="Groups">
          <BigButton w={51} icon={I.group} label={["Group"]} />
          <Col $w={32} $pad={4}>
            <Tool icon={I.ungroup} name="Ungroup" />
            <Tool icon={I.gEdit} name="Group edit" />
            <Tool icon={I.gSel} name="Group selection" on />
          </Col>
        </Panel>
        <Panel w={121} title="Utilities">
          <BigButton w={88} icon={I.measure} label={["Measure"]} menu />
          <Col $w={30} $pad={3}>
            <Tool icon={I.idPoint} name="Quick select" />
            <Tool icon={I.point} name="Point style" />
            <Tool icon={I.calc} name="Calculator" />
          </Col>
        </Panel>
        <Panel w={99} title="Clipboard" menu={false}>
          <BigButton w={66} icon={I.paste} label={["Paste"]} menu />
          <Col $w={30} $pad={3}>
            <Tool icon={I.cut} name="Cut" />
            <Tool icon={I.copyClip} name="Copy clip" />
          </Col>
        </Panel>
        <Panel w={78} title="View" launch>
          <BigButton w={77} icon={I.base} label={["Base"]} menu />
        </Panel>
      </Ribbon>

      <DocTabs aria-label="Documents">
        <DocTab $w={157}>Start</DocTab>
        <DocTab $w={148} $on>9th sem site*<Draw w={10}><path d="M1 1l8 8M9 1 1 9" stroke="#444" strokeWidth="2.400" /></Draw></DocTab>
        <NewTab aria-label="New drawing"><Draw w={10}><path d="M5 0v10M0 5h10" stroke="#c8c8c8" strokeWidth="2.400" /></Draw></NewTab>
      </DocTabs>

      <Canvas>
        <Edge><Thumb /></Edge>
        <Angle>165.37°</Angle>
        <LengthBox><LengthInput aria-label="Segment length" defaultValue="69.19" /></LengthBox>
        <Console>
          <History>
            <Past $tone="linear-gradient(#a2a2a2, #8c8c8c)">Specify next point or [Undo]:</Past>
            <Past $tone="linear-gradient(#8c8c8c, #757575)">Specify next point or [Close/Undo]:</Past>
            <Past $tone="linear-gradient(#757575, #5e5e5e)">Specify next point or [Close/Undo]:</Past>
          </History>
          <CommandLine>
            <Handle>
              <Draw w={8} h={22}><path d="M1 0v22M4 0v22M7 0v22" stroke="#bbb" strokeWidth="1.500" strokeDasharray="1.500 2.500" /></Draw>
              <Bare type="button" aria-label="Close command line"><Draw w={12}><path d="M1 1l10 10M11 1 1 11" stroke="#f0f0f0" strokeWidth="2.200" /></Draw></Bare>
              <Bare type="button" aria-label="Customize command line"><Draw w={24} h={22}><path d="M12 11l9 9" stroke="#e4e4ea" strokeWidth="4" /><path d="M8 1l4 2 2 4-1 5-4 1-5-3V6l4 2 2-2z" fill="#e4e4ea" /></Draw></Bare>
            </Handle>
            <CommandIcon><Draw w={22} h={22}><path d="M0 18h3v3H0zM16 0h3v3h-3z" fill="#a9cdf5" stroke="#cfe2fa" /></Draw><Tri w={8} c="#888" /></CommandIcon>
            <Keyname>LINE</Keyname>
            <span>Specify next point or [</span>
            <Option type="button"><em>C</em>lose</Option>
            <Option type="button"><em>U</em>ndo</Option>
            <span>]:</span>
            <Blink />
            <CommandInput aria-label="Command" />
            <ToolButton $w={22} type="button" aria-label="Recent commands"><Draw w={8} h={4}><path d="M0 4h8L4 0z" fill="#222" /></Draw></ToolButton>
          </CommandLine>
        </Console>
      </Canvas>

      <StatusBar>
        <Layouts aria-label="Layouts">
          <LayoutTab $w={69} $on>Model</LayoutTab>
          <LayoutTab $w={82}>Layout1</LayoutTab>
          <LayoutTab $w={80}>Layout2</LayoutTab>
          <AddLayout aria-label="New layout"><Draw w={10}><path d="M5 0v10M0 5h10" stroke="#c8c8c8" strokeWidth="2.400" /></Draw></AddLayout>
        </Layouts>
        <Status>
          <Cell $w={61} $pad={5}><Bare>MODEL</Bare></Cell>
          <Cell $w={81}>
            <Bare aria-label="Grid"><Draw><path d="M4 1v18M8 1v18M12 1v18M16 1v18M1 4h18M1 8h18M1 12h18M1 16h18" stroke={G} strokeWidth="1.300" /></Draw></Bare>
            <Bare aria-label="Snap"><Draw><path d="M2 2h17M2 6h17M2 10h17M2 14h17M2 18h17" stroke={G} strokeWidth="1.500" strokeDasharray="1.500 2" /></Draw></Bare>
            <Bare aria-label="Snap options"><Tri w={9} /></Bare>
          </Cell>
          <Cell $w={129}>
            <Bare aria-label="Ortho"><Draw><path d="M3 2v15h16M3 12h5v5" stroke={G} strokeWidth="1.800" /></Draw></Bare>
            <Bare aria-label="Polar"><Draw glow><path d="M18 10a8 8 0 1 1-3-6M10 10h10M10 10l7-7" stroke={B} strokeWidth="1.800" /></Draw></Bare>
            <Bare aria-label="Polar options"><Tri w={9} /></Bare>
            <Bare aria-label="Isodraft"><Draw w={22} h={24}><path d="M12 0v24M1 2l21 20" stroke={G} strokeWidth="1.800" /></Draw></Bare>
            <Bare aria-label="Isodraft options"><Tri w={9} /></Bare>
          </Cell>
          <Cell $w={80} $pad={4}>
            <Bare aria-label="Object snap tracking"><Draw glow><path d="M0 18h20M1 17 16 2" stroke={B} strokeWidth="1.800" /><path d="M7 8h4v4H7z" fill={B} /></Draw></Bare>
            <Bare aria-label="Object snap"><Draw w={22} glow><path d="M4 4h16v16H4z" stroke={B} strokeWidth="1.800" /><path d="M2 2h5v5H2z" fill="#00d000" stroke="#003c00" strokeWidth="1.600" /></Draw></Bare>
            <Bare aria-label="Object snap options"><Tri w={9} /></Bare>
          </Cell>
          <Cell $w={133} $pad={5} $gap={10}>
            <Bare aria-label="Annotation visibility"><Draw glow>{person(B)}<circle cx="16" cy="5" r="3.500" stroke={B} strokeWidth="1.800" /></Draw></Bare>
            <Bare aria-label="Auto scale"><Draw>{person(G)}<path d="M17 1l-3 5h4l-3 5" stroke={G} strokeWidth="1.800" /></Draw></Bare>
            <Bare aria-label="Annotation scale"><Draw>{person(G)}</Draw></Bare>
            <Bare>1:1</Bare>
            <Bare aria-label="Scale list"><Tri w={9} /></Bare>
          </Cell>
          <Cell $w={50} $pad={7} $gap={13}>
            <Bare aria-label="Workspace settings">{I.gear(G, 16)}</Bare>
            <Bare aria-label="Workspace list"><Tri w={9} /></Bare>
          </Cell>
          <Cell $w={31} $pad={5}><Bare aria-label="Annotation monitor"><Draw><path d="M10 1v18M1 10h18" stroke={G} strokeWidth="2.400" /></Draw></Bare></Cell>
          <Cell $w={32} $pad={4}><Bare aria-label="Isolate objects"><Draw><path d="M1 1h7v7H1zM8 11l4 8H4z" stroke={G} strokeWidth="1.600" /><circle cx="15" cy="9" r="3.800" stroke={G} strokeWidth="1.600" /></Draw></Bare></Cell>
          <Cell $w={33} $pad={5}><Bare aria-label="Hardware acceleration"><Draw glow><circle cx="10" cy="10" r="9.500" fill="#1450a0" stroke={B} strokeWidth="1.600" /><path d="M9 13l6-4" stroke={B} strokeWidth="2" /></Draw></Bare></Cell>
          <Cell $w={64} $pad={7} $gap={6}>
            <Bare aria-label="Performance"><Draw w={24} h={22}><path d="M1 1h21v18H1z" fill="#eee" stroke="#444" /><path d="M1 17q5 0 7-8 3-8 7 2 2 6 7 6" stroke="#333" strokeWidth="1.500" /><path d="M19 12l5 10H14z" fill="#e8742a" /><path d="M19 15v3m0 1v2" stroke="#fff" strokeWidth="1.500" /></Draw></Bare>
            <Bare aria-label="File trust"><Draw><path d="M2 1h11l4 4v9H2z" fill="#dfe9f5" stroke="#456" /><path d="M1 9h9l6 8H3z" fill="#f5d02a" /><path d="M9 4h7v7H9z" fill="#3c6ea8" /><path d="M5 1v7M2 5h6" stroke="#3c6ec0" strokeWidth="1.300" /><path d="M9 14l4 4 7-8" stroke="#35b52a" strokeWidth="3" /></Draw></Bare>
          </Cell>
          <Cell $w={62} $pad={5} $gap={11}>
            <Bare aria-label="Clean screen"><Draw><path d="M1 3h18v14H1z" stroke={G} strokeWidth="1.500" /><path d="M12 6h4v4m0-4-5 4M8 14H4v-4m0 4 5-4" stroke={G} strokeWidth="1.600" /></Draw></Bare>
            <Bare aria-label="Customization"><Draw><path d="M1 4h18M1 10h18M1 16h18" stroke={G} strokeWidth="2" /></Draw></Bare>
          </Cell>
        </Status>
      </StatusBar>

      <Taskbar>
        <Slot $w={60} aria-label="Start"><Draw><path d="M0 3l8-1v7.500H0zM9 1.800 20 0v9.500H9zM0 10.500h8V18l-8-1zM9 10.500h11V20L9 18.200z" fill="#fff" /></Draw></Slot>
        <Search>
          <Draw w={26} h={28}><circle cx="13" cy="14" r="11.500" stroke="#000" strokeWidth="3" /></Draw>
          <SearchInput aria-label="Search Windows" placeholder="Type here to search" />
          <Draw w={14} h={24}><rect x="4" y="1" width="6" height="16" stroke="#222" strokeWidth="1.400" /><path d="M1 12v4q0 4 6 4t6-4v-4M7 20v3M4 23h6" stroke="#222" strokeWidth="1.400" /></Draw>
        </Search>
        <Slot $w={63} aria-label="Task view"><Draw><path d="M1 0v3h12V0M1 6h12v9H1zM1 20v-3h12v3M18 0v20" stroke="#fff" strokeWidth="1.300" /><path d="M16.500 5h3v3h-3z" fill="#fff" /></Draw></Slot>
        <Slot $run aria-label="Edge"><Draw w={26} h={28}><path d="M1 12C3 4 8 1 14 1c8 0 12 6 11 14H9c0 5 4 7 8 7 3 0 5-1 7-2v5c-3 2-6 2.500-9 2.500C7 27.500 3 23 4 16c1-4 3-6 6-8-4 .5-7 2-9 4zm8-1h9c0-3-1-5-4-5s-4.500 2-5 5z" fill="#0b7bdc" /></Draw></Slot>
        <Slot aria-label="File Explorer"><Draw w={28} h={26}><path d="M1 2h9l2 3h14v18H1z" fill="#f5c84c" /><path d="M1 7h26v16H1z" fill="#ffe69a" /><path d="M7 25V16q0-2 2-2h10q2 0 2 2v9h-4v-6h-6v6z" fill="#35b1f0" /></Draw></Slot>
        <Slot aria-label="Store"><Draw w={30} h={30}><path d="M10 9V5q5-8 10 0v4" stroke="#ddd" strokeWidth="1.500" /><path d="M1 9h28l-1 20H2z" fill="#fff" /><path d="M8 12h6v6H8z" fill="#f25022" /><path d="M16 12h6v6h-6z" fill="#7fba00" /><path d="M8 20h6v6H8z" fill="#00a4ef" /><path d="M16 20h6v6h-6z" fill="#ffb900" /></Draw></Slot>
        <Slot aria-label="Calculator"><Draw w={22} h={30}><path d="M0 0h22v30H0z" fill="#fff" /><path d="M2 2h18v5H2z" fill="#1a2226" /><path d="M2 12h18M2 19h18M2 26h18" stroke="#1a2226" strokeWidth="3" strokeDasharray="3 2" /></Draw></Slot>
        <Slot aria-label="Photoshop"><Draw w={28} h={28}><path d="M1 1h26v26H1z" fill="#0c0652" stroke="#8ac5ff" strokeWidth="1.800" /><text x="14" y="19" textAnchor="middle" fontFamily="Open Sans, sans-serif" fontSize="14" fontWeight="600" fill="#8ac5ff">Ps</text></Draw></Slot>
        <Slot aria-label="Snipping Tool"><Draw w={28} h={28}><ellipse cx="12" cy="12" rx="12" ry="8" transform="rotate(-25 12 12)" fill="#999" /><ellipse cx="13" cy="8" rx="11" ry="7" transform="rotate(-15 13 8)" fill="#f2f2f2" stroke="#d6262c" strokeWidth="1.500" /><path d="M10 3l7 14M22 5 5 13" stroke="#bbb" strokeWidth="1.500" /><ellipse cx="17" cy="23" rx="3" ry="5" stroke="#1a86d8" strokeWidth="2" /><ellipse cx="23" cy="19" rx="5" ry="3" transform="rotate(25 23 19)" stroke="#1a86d8" strokeWidth="2" /></Draw></Slot>
        <Slot aria-label="Maps"><Draw w={30} h={30}><path d="M.5.500h29v29H.5z" fill="#3e7186" stroke="#d5e3e8" /><path d="M1 17q14 1 28-12" stroke="#eef5f7" strokeWidth="1.500" /><path d="M9 13Q8 6 13 3q2 6-2 11zM18 12q2 6 8 5-1-5-7-6z" fill="#eef5f7" /><text x="15" y="27" textAnchor="middle" fontFamily="Open Sans, sans-serif" fontSize="11" fontWeight="700" fill="#fff">8</text></Draw></Slot>
        <Slot aria-label="PowerPoint"><Draw w={28} h={28}><path d="M14 4h13v20H14z" fill="#fff" stroke="#d04423" /><path d="M18 17h7M18 20h7" stroke="#d04423" strokeWidth="1.500" /><path d="M18 8a3.500 3.500 0 1 0 4 4h-4z" fill="#d04423" /><path d="M1 3l16-3v28L1 25z" fill="#d04423" /><text x="9" y="19" textAnchor="middle" fontFamily="Open Sans, sans-serif" fontSize="14" fontWeight="700" fill="#fff">P</text></Draw></Slot>
        <Slot aria-label="Lightroom"><Draw w={28} h={28}><rect x="1" y="1" width="26" height="26" rx="4" fill="#02191c" stroke="#1ee0e8" strokeWidth="1.800" /><text x="14" y="19" textAnchor="middle" fontFamily="Open Sans, sans-serif" fontSize="14" fontWeight="600" fill="#aee4e8">Lr</text></Draw></Slot>
        <Slot $run $on aria-label="AutoCAD"><Draw w={30} h={30}><path d="M0 0h30v30H0z" fill="url(#ruby)" /><path d="M15 4l9 18-3 3-6-6-6 6-3-3z" fill="#c41d24" /><path d="M15 4l9 18-3 3-6-9z" fill="#8c0f15" /></Draw></Slot>
        <Tray>
          <Slot $w={62} aria-label="People"><Draw w={20}><g stroke="#fff" strokeWidth="1.500"><circle cx="13.500" cy="4" r="3" /><circle cx="7" cy="11" r="3" /><path d="M10 10q3-4 8 2M2 19q5-8 10 0" /></g></Draw></Slot>
          <Slot $w={30} aria-label="Hidden icons"><Draw w={16} h={9}><path d="M0 8.500 8 1l8 7.500" stroke="#fff" strokeWidth="1.500" /></Draw></Slot>
          <Slot $w={30} aria-label="Battery"><Draw w={18} h={11}><path d="M.7.700h15v9.600H.7zM17 4v3" stroke="#fff" strokeWidth="1.400" /><path d="M3 3h7v5H3z" fill="#fff" /></Draw></Slot>
          <Slot $w={30} aria-label="Network"><Draw w={16}><path d="M1 16Q1 2 15 1M5 16q0-9 10-10M9 16q0-5 6-6" stroke="#ddd" strokeWidth="1.400" /><circle cx="14" cy="15" r="1.800" fill="#fff" /></Draw></Slot>
          <Slot $w={30} aria-label="Volume"><Draw w={20} h={16}><path d="M1 5h3l4-4v14l-4-4H1z" stroke="#fff" strokeWidth="1.300" /><path d="M11 6q1 2 0 4" stroke="#fff" strokeWidth="1.300" /><path d="M14 4q3 4 0 8M17 2q4 6 0 12" stroke="#8a9296" strokeWidth="1.300" /></Draw></Slot>
          <Slot $w={40} aria-label="Ink workspace"><Draw><g stroke="#fff" strokeWidth="1.500"><path d="M9 13C4 10 1 12 1 15.500S6 20 7 17" /><path d="M7 17 14 3q2-3 4-1t0 4L10 16z" /><path d="M9 19q5 0 6-4 1-3 5-4" /></g></Draw></Slot>
          <Clock>11:32<br />29-08-2018</Clock>
          <Slot $w={58} aria-label="Notifications"><Draw w={32} h={34}><path d="M1 4h20v16h-9l-4 4v-4H1z" fill="#fff" /><path d="M4 8h14M4 12h14M4 16h9" stroke="#222" strokeWidth="1.500" /><circle cx="21" cy="22" r="10.500" fill="#333a3e" stroke="#888" /><text x="21" y="27" textAnchor="middle" fontFamily="Open Sans, sans-serif" fontSize="14" fontWeight="600" fill="#fff">21</text></Draw></Slot>
          <Peek />
        </Tray>
      </Taskbar>
    </App_>
  );
}
